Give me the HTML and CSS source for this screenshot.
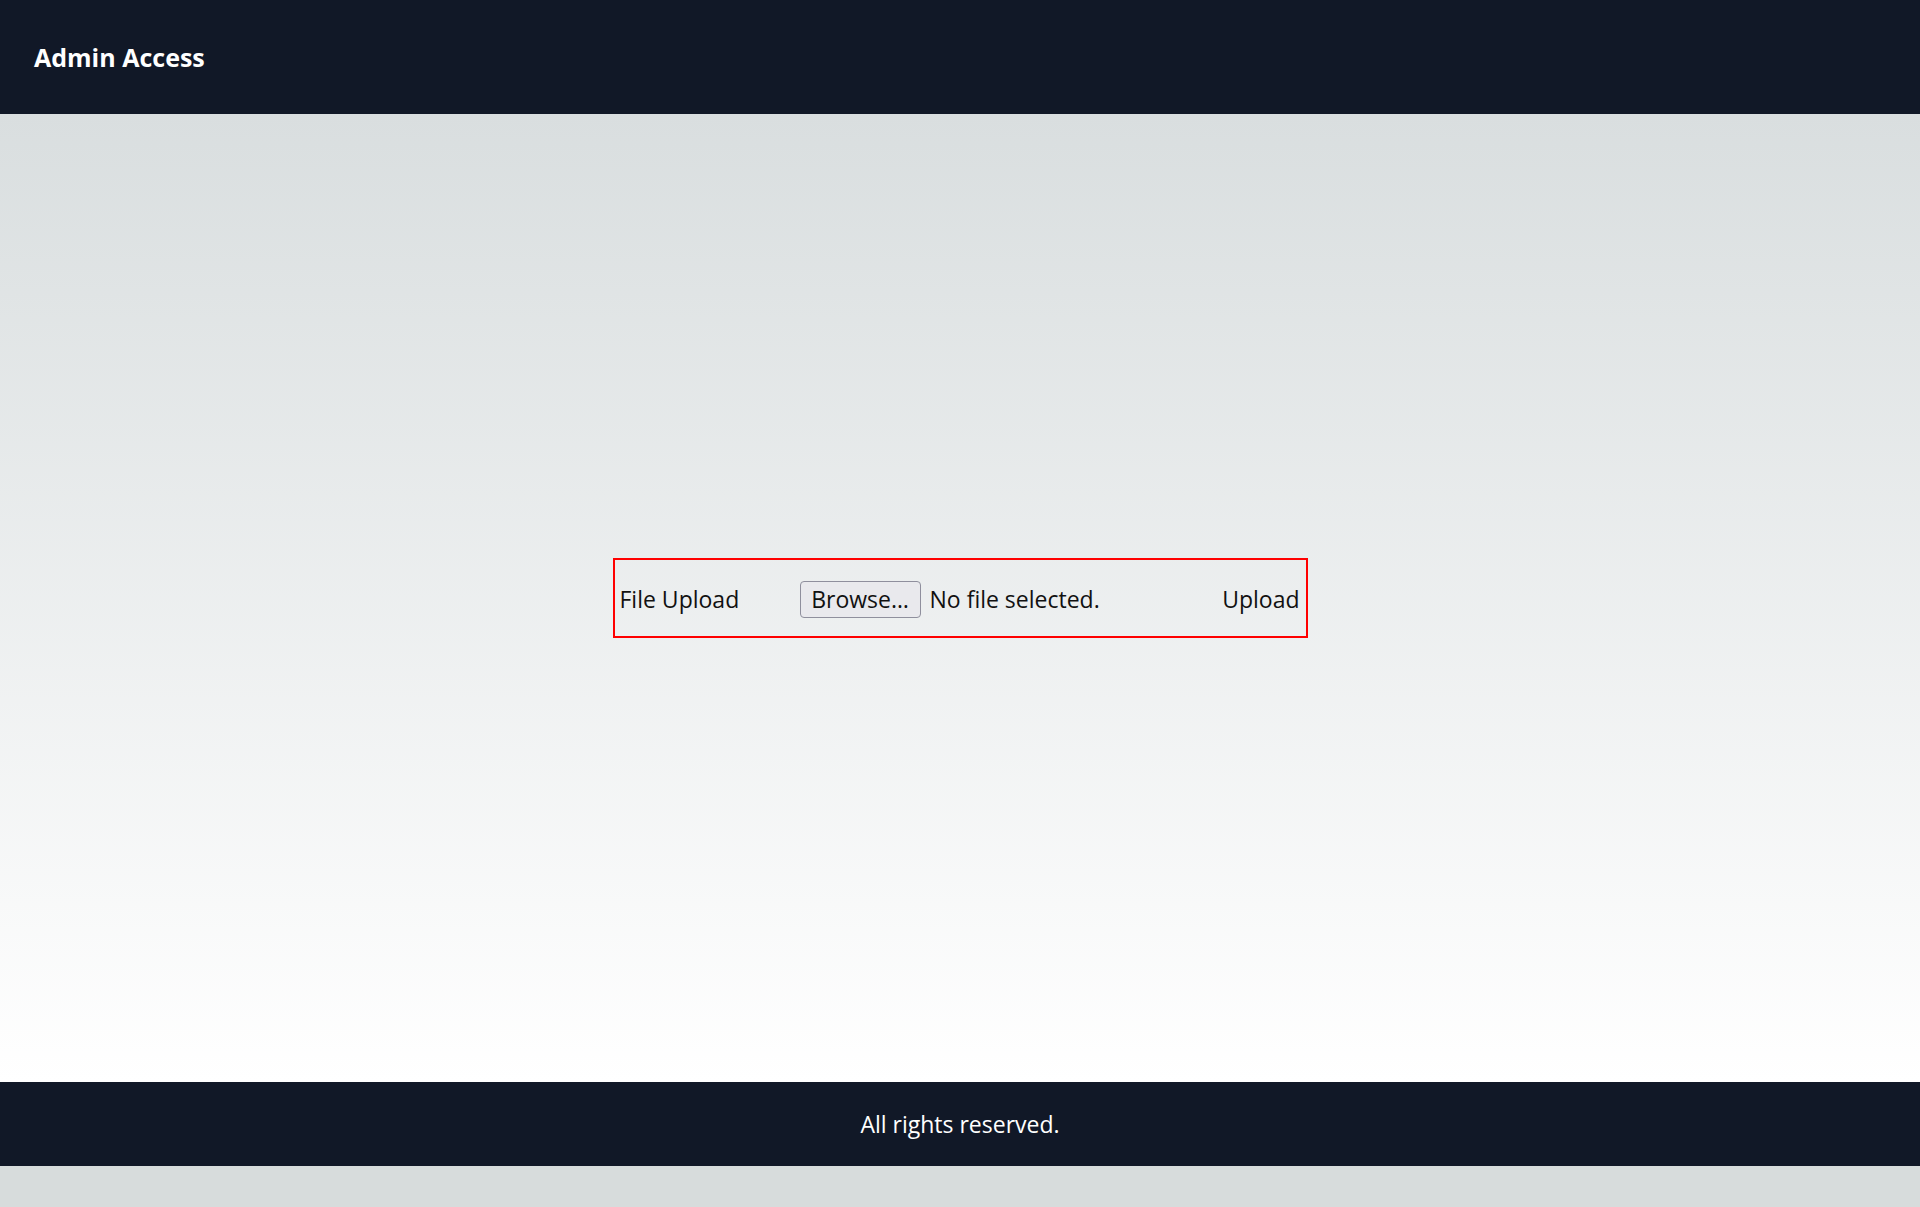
FILE: index.html
```html
<!DOCTYPE html>
<html lang="en">
<head>
<meta charset="utf-8">
<title>Admin Access</title>
<link rel="stylesheet" href="styles.css">
</head>
<body>
<header class="site-header">
  <h1 class="brand">Admin Access</h1>
</header>
<main class="main">
  <form class="upload-form">
    <label class="upload-label">File Upload</label>
    <div class="file-control">
      <span class="browse-btn">Browse…</span>
      <span class="file-status">No file selected.</span>
    </div>
    <span class="upload-btn">Upload</span>
  </form>
</main>
<footer class="site-footer">
  <p class="copy">All rights reserved.</p>
</footer>
</body>
</html>
```
FILE: styles.css
```css
html, body {
  margin: 0;
  padding: 0;
}
body {
  background: #d7dcdc;
  font-family: "Open Sans", "Noto Sans", sans-serif;
  color: #111;
}
.site-header {
  background: #111827;
  height: 114px;
  display: flex;
  align-items: center;
  padding: 0 34px;
  box-sizing: border-box;
}
.brand {
  margin: 0;
  color: #fff;
  font-size: 25px;
  font-weight: 700;
}
.main {
  height: 968px;
  background: linear-gradient(to bottom, #d9dedf 0%, #ffffff 100%);
  display: flex;
  align-items: center;
  justify-content: center;
}
.upload-form {
  width: 695px;
  height: 80px;
  box-sizing: border-box;
  border: 2px solid #ff0000;
  display: flex;
  align-items: center;
  padding: 2px 6px 0 5px;
  font-size: 23px;
  color: #111;
}
.upload-label {
  width: 180px;
  flex: none;
}
.file-control {
  display: flex;
  align-items: center;
  gap: 9px;
  flex: 1;
}
.browse-btn {
  display: inline-flex;
  align-items: center;
  justify-content: center;
  width: 121px;
  height: 37px;
  box-sizing: border-box;
  border: 1px solid #8f8f9d;
  border-radius: 4px;
  background: #e9e9ed;
}
.upload-btn {
  flex: none;
}
.site-footer {
  background: #111827;
  height: 84px;
  display: flex;
  align-items: center;
  justify-content: center;
}
.copy {
  margin: 0;
  color: #fff;
  font-size: 23px;
}
```
